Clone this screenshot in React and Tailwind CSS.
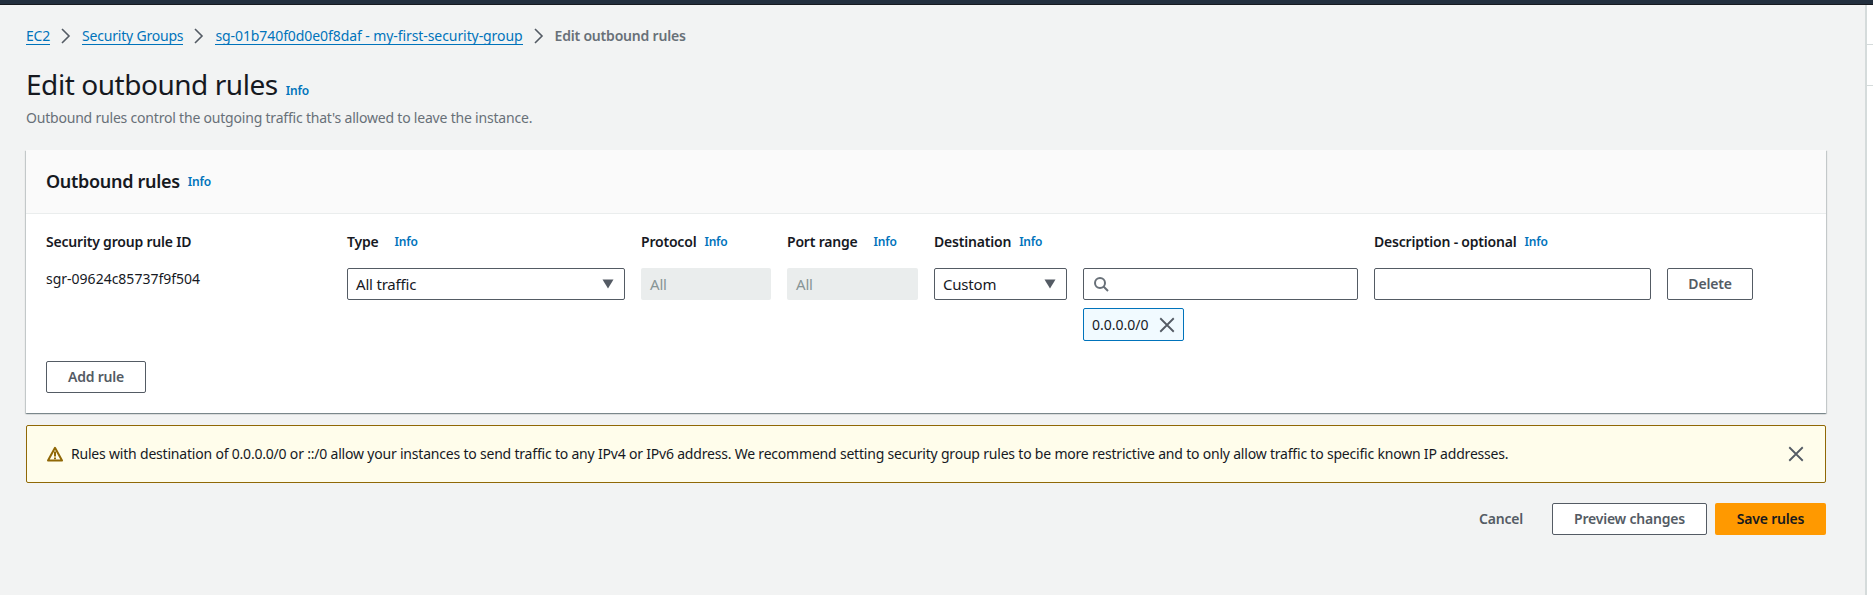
const FONT = 'font-["Noto_Sans",sans-serif] tracking-[-0.2px]';

function Info({ className = '' }) {
  return <a className={`text-[#0073bb] text-xs font-semibold ${className}`}>Info</a>;
}

function Crumb({ children, className = '' }) {
  return <a className={`text-[#0073bb] text-sm border-b border-[#0073bb] leading-[17px] ${className}`}>{children}</a>;
}

function Chevron() {
  return (
    <svg width="16" height="16" viewBox="0 0 16 16" fill="none" stroke="#545b64" strokeWidth="1.6" className="mx-2">
      <path d="M4 1 L11 8 L4 15" />
    </svg>
  );
}

function Caret() {
  return (
    <svg width="12" height="10" viewBox="0 0 12 10" fill="#545b64">
      <path d="M0.5 0.5 H11.5 L6 9.5 Z" />
    </svg>
  );
}

function CloseIcon({ size = 18 }) {
  return (
    <svg width={size} height={size} viewBox="0 0 16 16" fill="none" stroke="#545b64" strokeWidth="1.6">
      <path d="M2 2 L14 14 M14 2 L2 14" />
    </svg>
  );
}

function Label({ children, info, gap = 'ml-2' }) {
  return (
    <div className="flex items-center h-[24px]">
      <span className="text-sm font-semibold text-[#16191f]">{children}</span>
      {info && <Info className={gap} />}
    </div>
  );
}

function Select({ children }) {
  return (
    <div className="h-[32px] border border-[#545b64] rounded-[2px] bg-white flex items-center justify-between pl-[8px] pr-[10px] text-[15px] text-[#16191f]">
      <span>{children}</span>
      <Caret />
    </div>
  );
}

function Disabled() {
  return <div className="h-[32px] rounded-[2px] bg-[#eaeded] flex items-center pl-[9px] text-[15px] text-[#879596]">All</div>;
}

function Btn({ children }) {
  return (
    <button className="h-[32px] border border-[#545b64] rounded-[2px] bg-white text-sm font-semibold text-[#545b64] flex items-center justify-center">
      {children}
    </button>
  );
}

export default function App() {
  return (
    <div className={`${FONT} w-[1873px] h-[595px] overflow-hidden bg-white flex flex-col`}>
      <div className="h-[4px] bg-[#232f3e] border-b border-[#16191f] box-content shrink-0" />
      <div className="flex flex-1 min-h-0">
        <main className="w-[1865px] bg-[#f2f3f3] pl-[26px] pr-[39px]">
          <nav className="flex items-center h-[24px] mt-[19px]">
            <Crumb>EC2</Crumb>
            <Chevron />
            <Crumb>Security Groups</Crumb>
            <Chevron />
            <Crumb className="tracking-[-0.08px]">sg-01b740f0d0e0f8daf - my-first-security-group</Crumb>
            <Chevron />
            <span className="text-sm font-semibold text-[#687078]">Edit outbound rules</span>
          </nav>

          <div className="flex items-baseline mt-[18px]">
            <h1 className="text-[28px] leading-[36px] tracking-[-0.45px] text-[#16191f]">Edit outbound rules</h1>
            <Info className="ml-2" />
          </div>
          <p className="text-sm leading-[20px] text-[#687078] mt-[6px]">
            Outbound rules control the outgoing traffic that's allowed to leave the instance.
          </p>

          <section className="mt-[22px] bg-white shadow-[0_1px_1px_0_rgba(0,28,36,0.3),1px_1px_1px_0_rgba(0,28,36,0.15),-1px_1px_1px_0_rgba(0,28,36,0.15)] h-[263px]">
            <header className="h-[64px] bg-[#fafafa] border-b border-[#eaeded] px-5 pb-[2px] flex items-center">
              <h2 className="text-lg font-semibold tracking-[-0.3px] text-[#16191f]">Outbound rules</h2>
              <Info className="ml-2 mt-[3px]" />
            </header>
            <div className="px-5 pt-4">
              <div className="grid grid-cols-[285px_278px_130px_131px_133px_275px_277px_86px] gap-x-4">
                <Label>Security group rule ID</Label>
                <Label info gap="ml-4">Type</Label>
                <Label info>Protocol</Label>
                <Label info gap="ml-4">Port range</Label>
                <div className="col-span-2"><Label info>Destination</Label></div>
                <div className="col-span-2"><Label info>Description - optional</Label></div>
              </div>
              <div className="grid grid-cols-[285px_278px_130px_131px_133px_275px_277px_86px] gap-x-4 mt-[14px]">
                <div className="text-sm text-[#16191f] leading-[20px] pt-[1px] tracking-[0px]">sgr-09624c85737f9f504</div>
                <Select>All traffic</Select>
                <Disabled />
                <Disabled />
                <Select>Custom</Select>
                <div>
                  <div className="h-[32px] border border-[#545b64] rounded-[2px] bg-white flex items-center pl-[9px]">
                    <svg width="16" height="16" viewBox="0 0 16 16" fill="none" stroke="#687078" strokeWidth="2">
                      <circle cx="7" cy="7" r="5" />
                      <path d="M10.5 10.5 L15 15" />
                    </svg>
                  </div>
                  <div className="mt-2 w-[101px] h-[33px] border border-[#0073bb] rounded-[2px] bg-[#f1faff] flex items-center pl-2 text-sm tracking-[0px] text-[#16191f]">
                    <span>0.0.0.0/0</span>
                    <span className="ml-[9px]"><CloseIcon /></span>
                  </div>
                </div>
                <div className="h-[32px] border border-[#545b64] rounded-[2px] bg-white" />
                <Btn>Delete</Btn>
              </div>
              <button className="h-[32px] w-[100px] border border-[#545b64] rounded-[2px] bg-white text-sm font-semibold text-[#545b64] mt-[20px]">
                Add rule
              </button>
            </div>
          </section>

          <div className="mt-[12px] h-[58px] border border-[#906806] rounded-[2px] bg-[#fffdeb] flex items-center pl-[20px] pr-[20px]">
            <svg width="16" height="16" viewBox="0 0 16 16" className="shrink-0">
              <path d="M8 1.8 L15 14.5 H1 Z" fill="none" stroke="#906806" strokeWidth="2" strokeLinejoin="round" />
              <path d="M8 5.5 V10.5 M8 11.5 V13.2" stroke="#906806" strokeWidth="2" />
            </svg>
            <p className="ml-2 text-sm text-[#16191f] flex-1">
              Rules with destination of 0.0.0.0/0 or ::/0 allow your instances to send traffic to any IPv4 or IPv6 address. We recommend setting security group rules to be more restrictive and to only allow traffic to specific known IP addresses.
            </p>
            <CloseIcon />
          </div>

          <div className="flex justify-end items-center mt-[20px]">
            <span className="text-sm font-semibold text-[#545b64] mr-[29px]">Cancel</span>
            <button className="h-[32px] w-[155px] border border-[#545b64] rounded-[2px] bg-white text-sm font-semibold text-[#545b64]">
              Preview changes
            </button>
            <button className="h-[32px] w-[111px] ml-2 rounded-[2px] bg-[#ff9900] text-sm font-semibold text-[#16191f]">
              Save rules
            </button>
          </div>
        </main>
        <aside className="flex-1 border-l-2 border-[#d5dbdb] bg-white">
          <div className="h-[40px] border-b border-[#d5dbdb]" />
          <div className="h-[41px] border-b border-[#d5dbdb]" />
        </aside>
      </div>
    </div>
  );
}
